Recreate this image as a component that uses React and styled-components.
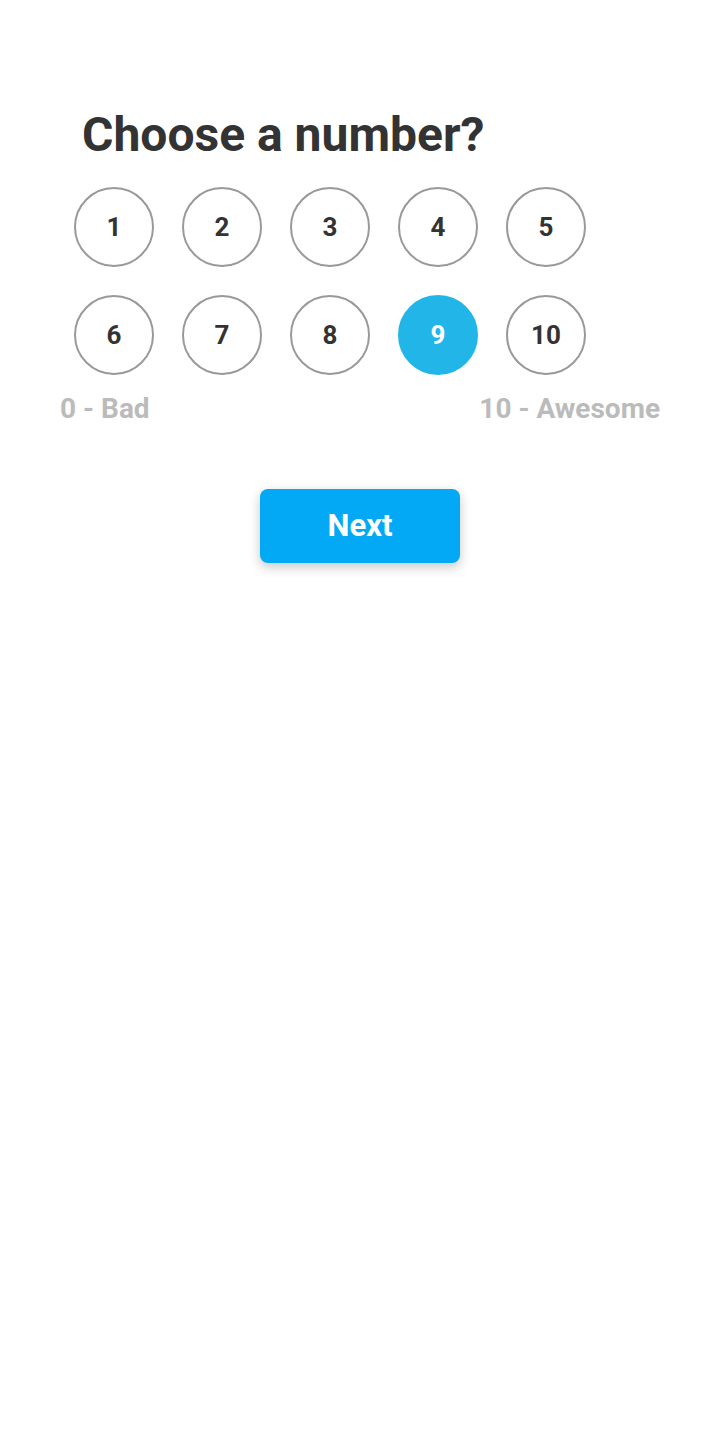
import React, { useState } from 'react';
import styled, { createGlobalStyle } from 'styled-components';

const GlobalStyle = createGlobalStyle`
  body {
    margin: 0;
    background: #ffffff;
    font-family: Roboto, "Liberation Sans", sans-serif;
  }
`;

const Page = styled.div`
  width: 720px;
  min-height: 1448px;
  padding: 104px 60px 0;
  box-sizing: border-box;
`;

const Title = styled.h1`
  margin: 0 0 0 22px;
  font-size: 48px;
  font-weight: 700;
  line-height: 62px;
  color: #333333;
`;

const Grid = styled.div`
  display: grid;
  grid-template-columns: repeat(5, 80px);
  gap: 28px;
  margin: 21px 0 0 14px;
`;

const Circle = styled.button`
  width: 80px;
  height: 80px;
  border-radius: 50%;
  box-sizing: border-box;
  border: 2px solid ${props => (props.active ? '#22b5e8' : '#999999')};
  background: ${props => (props.active ? '#22b5e8' : '#ffffff')};
  color: ${props => (props.active ? '#ffffff' : '#333333')};
  font-family: Roboto, "Liberation Sans", sans-serif;
  font-size: 26px;
  font-weight: 700;
  padding: 0;
  cursor: pointer;
  display: flex;
  align-items: center;
  justify-content: center;
`;

const Scale = styled.div`
  display: flex;
  justify-content: space-between;
  margin-top: 15px;
  font-size: 28px;
  font-weight: 700;
  color: #bbbbbb;
  line-height: 38px;
`;

const Actions = styled.div`
  display: flex;
  justify-content: center;
  margin-top: 61px;
`;

const NextButton = styled.button`
  width: 200px;
  height: 74px;
  padding: 0 0 2px;
  border: none;
  border-radius: 8px;
  background: #03a9f4;
  color: #ffffff;
  font-family: Roboto, "Liberation Sans", sans-serif;
  font-size: 31px;
  font-weight: 700;
  box-shadow: 0 4px 12px rgba(0, 0, 0, 0.22);
  cursor: pointer;
`;

const numbers = [1, 2, 3, 4, 5, 6, 7, 8, 9, 10];

const App = () => {
  const [selected, setSelected] = useState(9);

  return (
    <>
      <GlobalStyle />
      <Page>
        <Title>Choose a number?</Title>
        <Grid>
          {numbers.map(n => (
            <Circle key={n} active={n === selected} onClick={() => setSelected(n)}>
              {n}
            </Circle>
          ))}
        </Grid>
        <Scale>
          <span>0 - Bad</span>
          <span>10 - Awesome</span>
        </Scale>
        <Actions>
          <NextButton>Next</NextButton>
        </Actions>
      </Page>
    </>
  );
};

export default App;
